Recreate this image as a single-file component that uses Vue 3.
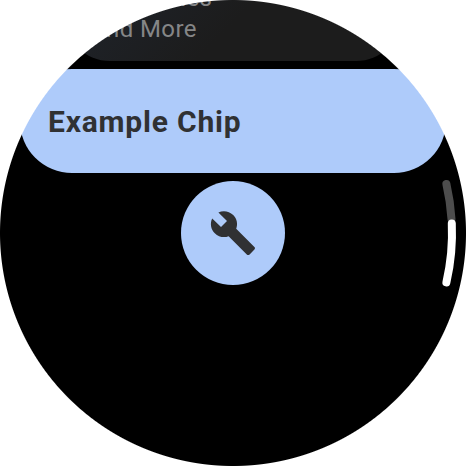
<script setup>
const cardLines = ['Wrap Lines', 'And More']
const chipLabel = 'Example Chip'
</script>

<template>
  <main class="watch">
    <section class="card">
      <p v-for="line in cardLines" :key="line">{{ line }}</p>
    </section>
    <button class="chip">{{ chipLabel }}</button>
    <button class="round" aria-label="Settings">
      <svg viewBox="0 0 24 24" width="48" height="48">
        <path d="M22.7 19l-9.1-9.1c.9-2.3.4-5-1.5-6.9-2-2-5-2.4-7.4-1.3L9 6 6 9 1.6 4.7C.4 7.1.9 10.1 2.9 12.1c1.9 1.9 4.6 2.4 6.9 1.5l9.1 9.1c.4.4 1 .4 1.4 0l2.3-2.3c.5-.4.5-1.1.1-1.4z" />
      </svg>
    </button>
    <svg class="scroll" viewBox="0 0 466 466">
      <path class="track" d="M446.4 184A219 219 0 0 1 451.5 219" />
      <path class="thumb" d="M451.8 223.4A219 219 0 0 1 446.4 282.4" />
    </svg>
  </main>
</template>

<style>
body {
  background: #fff;
}
</style>

<style scoped>
.watch {
  position: relative;
  width: 466px;
  height: 466px;
  overflow: hidden;
  background: #000;
  display: flex;
  flex-direction: column;
  align-items: center;
  gap: 8px;
  font-family: Roboto, sans-serif;
}
/* Round bezel over the square surface */
.watch::after {
  content: '';
  position: absolute;
  inset: 0;
  background: radial-gradient(circle at center, transparent 232.5px, #fff 233.5px);
  pointer-events: none;
}
.card {
  box-sizing: border-box;
  flex: none;
  width: 338px;
  height: 121px;
  margin-top: -60px;
  padding: 43px 26px 16px;
  border-radius: 46px;
  background: linear-gradient(135deg, #202630 0%, #1c1c1c 55%);
  color: #858687;
  font-size: 24px;
  line-height: 31px;
  letter-spacing: 0.4px;
}
.card p {
  margin: 0;
}
button {
  border: 0;
  flex: none;
  background: #aecbfa;
  color: #303133;
  font-family: inherit;
}
.chip {
  width: 426px;
  height: 104px;
  border-radius: 52px;
  padding: 0 28px 0 28px;
  text-align: left;
  font-size: 30px;
  font-weight: 700;
  letter-spacing: 0.79px;
}
.round {
  width: 104px;
  height: 104px;
  border-radius: 50%;
  padding: 0;
  display: grid;
  place-items: center;
}
.round path {
  fill: #303133;
}
.scroll {
  position: absolute;
  inset: 0;
  fill: none;
  stroke-width: 8;
  stroke-linecap: round;
}
.track {
  stroke: #4d4d4d;
}
.thumb {
  stroke: #fff;
}
</style>
